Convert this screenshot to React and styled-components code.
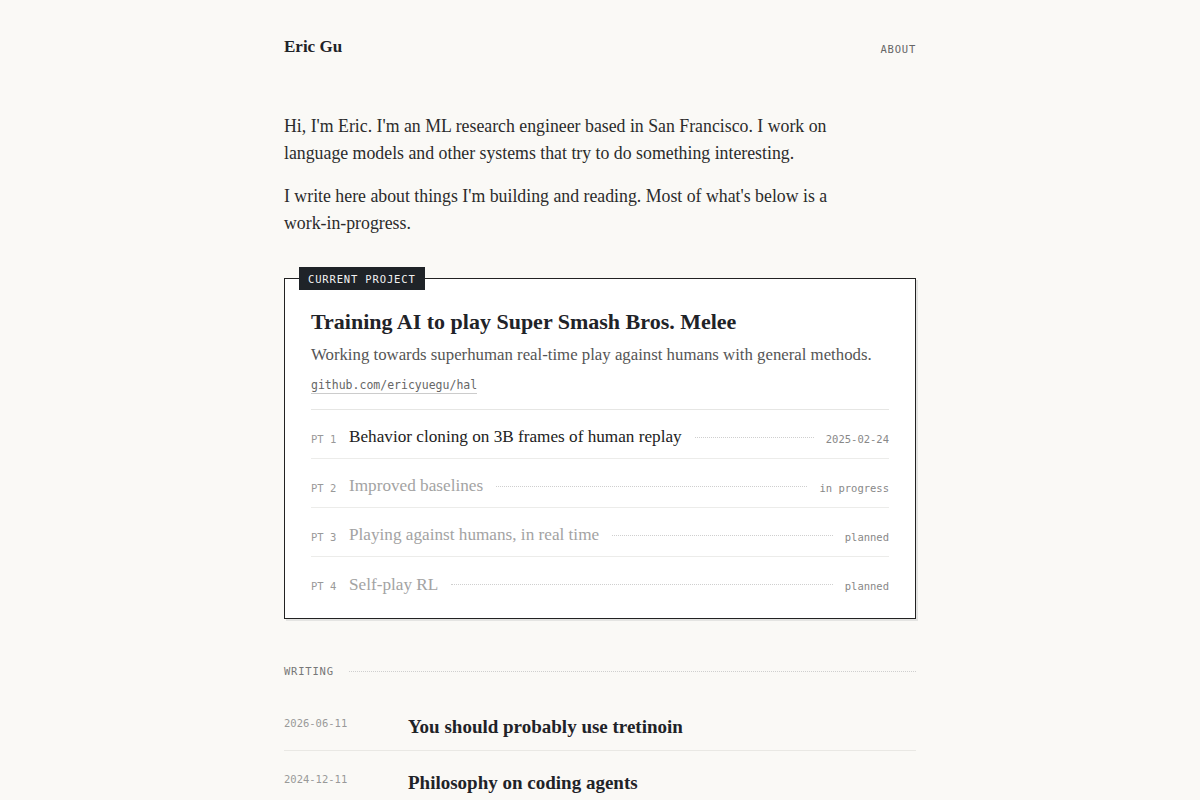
import React from "react";
import styled, { createGlobalStyle } from "styled-components";

const serif = `"Liberation Serif", "DejaVu Serif", serif`;
const mono = `"DejaVu Sans Mono", "Liberation Mono", monospace`;

const GlobalStyle = createGlobalStyle`
  html, body {
    margin: 0;
    padding: 0;
    background: #faf9f6;
    color: #1f2328;
    font-family: ${serif};
  }
  a {
    color: inherit;
    text-decoration: none;
  }
`;

const Page = styled.div`
  width: 632px;
  margin: 0 auto;
  padding: 35px 0 40px;
`;

const Header = styled.header`
  display: flex;
  justify-content: space-between;
  align-items: center;
  height: 24px;
`;

const Name = styled.a`
  font-size: 17px;
  font-weight: 700;
  color: #1f2328;
`;

const NavLink = styled.a`
  font-family: ${mono};
  font-size: 10.5px;
  letter-spacing: 0.8px;
  color: #666;
  padding-top: 3px;
`;

const Intro = styled.section`
  margin-top: 54px;
  max-width: 565px;
`;

const Para = styled.p`
  margin: 0 0 16px;
  font-size: 17.8px;
  line-height: 27px;
  color: #2b2b2b;
`;

const Card = styled.section`
  position: relative;
  margin-top: 41px;
  background: #fff;
  border: 1px solid #222;
  box-shadow: 2px 2px 0 #e4e4e2;
  padding: 29px 26px 12px;
`;

const Tag = styled.span`
  position: absolute;
  top: -12px;
  left: 14px;
  background: #1f2328;
  color: #f2f2f2;
  font-family: ${mono};
  font-size: 10.5px;
  letter-spacing: 0.85px;
  padding: 5px 9px 4px;
  line-height: 14px;
`;

const Title = styled.h2`
  margin: 0;
  font-size: 22px;
  font-weight: 700;
  line-height: 28px;
  color: #1f2328;
`;

const Summary = styled.p`
  margin: 7px 0 0;
  font-size: 16.8px;
  line-height: 24px;
  color: #555;
`;

const RepoLink = styled.a`
  display: inline-block;
  margin-top: 11px;
  font-family: ${mono};
  font-size: 11.5px;
  color: #666;
  border-bottom: 1px solid #ccc;
  line-height: 15px;
`;

const Parts = styled.ol`
  list-style: none;
  margin: 15px 0 0;
  padding: 0;
  border-top: 1px solid #e6e6e4;
`;

const Part = styled.li`
  display: flex;
  align-items: center;
  gap: 12px;
  box-sizing: border-box;
  height: 49px;
  padding-top: 6px;
  border-bottom: ${(p) => (p.$last ? "none" : "1px solid #ececea")};
`;

const PartNo = styled.span`
  font-family: ${mono};
  font-size: 10.5px;
  color: #999;
  width: 26px;
  flex-shrink: 0;
  padding-top: 3px;
`;

const PartTitle = styled.span`
  font-size: 17.2px;
  color: ${(p) => (p.$done ? "#222" : "#a3a3a3")};
  white-space: nowrap;
`;

const Leader = styled.span`
  flex: 1;
  border-bottom: 1px dotted #cfcfcf;
  margin: 0 0 0 1px;
  height: 0;
`;

const PartStatus = styled.span`
  font-family: ${mono};
  font-size: 10.5px;
  color: #888;
  padding-top: 3px;
`;

const SectionHead = styled.div`
  display: flex;
  align-items: center;
  gap: 14px;
  margin-top: 45px;
`;

const SectionLabel = styled.span`
  font-family: ${mono};
  font-size: 10.5px;
  letter-spacing: 0.8px;
  color: #777;
  line-height: 14px;
`;

const Posts = styled.ul`
  list-style: none;
  margin: 17px 0 0;
  padding: 0;
`;

const Post = styled.li`
  display: grid;
  grid-template-columns: 124px 1fr;
  align-items: start;
  padding: 18px 0 9px;
  border-bottom: 1px solid #e9e8e4;
`;

const PostDate = styled.span`
  font-family: ${mono};
  font-size: 10.5px;
  color: #999;
  line-height: 14px;
  padding-top: 3px;
`;

const PostTitle = styled.a`
  font-size: 19px;
  font-weight: 700;
  color: #1f2328;
  line-height: 28px;
`;

const parts = [
  { no: 1, title: "Behavior cloning on 3B frames of human replay", status: "2025-02-24", done: true },
  { no: 2, title: "Improved baselines", status: "in progress" },
  { no: 3, title: "Playing against humans, in real time", status: "planned" },
  { no: 4, title: "Self-play RL", status: "planned" },
];

const posts = [
  { date: "2026-06-11", title: "You should probably use tretinoin" },
  { date: "2024-12-11", title: "Philosophy on coding agents" },
];

const App = () => {
  return (
    <>
      <GlobalStyle />
      <Page>
        <Header>
          <Name href="#">Eric Gu</Name>
          <NavLink href="#">ABOUT</NavLink>
        </Header>

        <Intro>
          <Para>
            Hi, I'm Eric. I'm an ML research engineer based in San Francisco. I
            work on language models and other systems that try to do something
            interesting.
          </Para>
          <Para>
            I write here about things I'm building and reading. Most of what's
            below is a work-in-progress.
          </Para>
        </Intro>

        <Card>
          <Tag>CURRENT PROJECT</Tag>
          <Title>Training AI to play Super Smash Bros. Melee</Title>
          <Summary>
            Working towards superhuman real-time play against humans with
            general methods.
          </Summary>
          <RepoLink href="#">github.com/ericyuegu/hal</RepoLink>
          <Parts>
            {parts.map((p, i) => (
              <Part key={p.no} $last={i === parts.length - 1}>
                <PartNo>PT {p.no}</PartNo>
                <PartTitle $done={p.done}>{p.title}</PartTitle>
                <Leader />
                <PartStatus>{p.status}</PartStatus>
              </Part>
            ))}
          </Parts>
        </Card>

        <SectionHead>
          <SectionLabel>WRITING</SectionLabel>
          <Leader />
        </SectionHead>

        <Posts>
          {posts.map((p) => (
            <Post key={p.date}>
              <PostDate>{p.date}</PostDate>
              <PostTitle href="#">{p.title}</PostTitle>
            </Post>
          ))}
        </Posts>
      </Page>
    </>
  );
};

export default App;
